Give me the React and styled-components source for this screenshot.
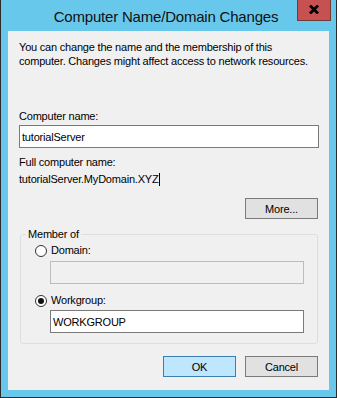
import React from 'react'
import styled, { createGlobalStyle } from 'styled-components'

const GlobalStyle = createGlobalStyle`
  html, body {
    margin: 0;
    padding: 0;
    background: #68c8ec;
  }
  body {
    font-family: "Liberation Sans", Arial, sans-serif;
    font-size: 11px;
    color: #000;
  }
`

const Frame = styled.div`
  box-sizing: border-box;
  width: 337px;
  height: 398px;
  background: #68c8ec;
  border: 1px solid #2b2b2b;
  border-top: none;
  display: flex;
  flex-direction: column;
  padding: 0 7px 7px 7px;
`

const TitleBar = styled.div`
  height: 31px;
  margin: 0 -7px;
  padding-right: 5px;
  display: grid;
  grid-template-columns: 1fr auto 1fr;
  align-items: center;
`

const Title = styled.div`
  grid-column: 2;
  font-size: 15px;
  letter-spacing: -0.2px;
  color: #111;
  padding-top: 1px;
`

const CloseButton = styled.div`
  grid-column: 3;
  justify-self: end;
  align-self: start;
  box-sizing: border-box;
  width: 34px;
  height: 21px;
  background: #c75050;
  border: 1px solid #6e3a3a;
  border-top: none;
  display: flex;
  align-items: center;
  justify-content: center;
  padding-bottom: 1px;
`

const Client = styled.div`
  flex: 1;
  background: #f0f0f0;
  display: flex;
  flex-direction: column;
  padding: 9px 10px 0 11px;
  letter-spacing: -0.2px;
`

const Intro = styled.p`
  margin: 0;
  line-height: 14px;
  white-space: nowrap;
`

const Label = styled.div`
  line-height: 13px;
  margin-top: ${p => p.gap || 0}px;
`

const TextBox = styled.div`
  box-sizing: border-box;
  height: ${p => p.h || 23}px;
  width: ${p => (p.w ? `${p.w}px` : '100%')};
  margin-top: ${p => p.gap || 0}px;
  border: 1px solid ${p => (p.disabled ? '#bcbcbc' : '#7a7a7a')};
  background: ${p => (p.disabled ? '#f0f0f0' : '#fff')};
  padding: 0 2px;
  display: flex;
  align-items: center;
`

const ValueLine = styled.div`
  margin-top: 3px;
  line-height: 14px;
  display: flex;
  align-items: center;
`

const Caret = styled.span`
  display: inline-block;
  width: 1px;
  height: 13px;
  background: #000;
  margin-left: 1px;
`

const ButtonRow = styled.div`
  display: flex;
  justify-content: flex-end;
  gap: 9px;
  margin-top: ${p => p.gap || 0}px;
  padding-right: 1px;
`

const Button = styled.div`
  box-sizing: border-box;
  width: 73px;
  height: 21px;
  border: 1px solid ${p => (p.primary ? '#3c7fb1' : '#7a7a7a')};
  background: ${p => (p.primary ? '#bee6fd' : '#e1e1e1')};
  display: flex;
  align-items: center;
  justify-content: center;
`

const Group = styled.fieldset`
  margin: 9px 1px 0 1px;
  padding: 0 13px 10px 13px;
  border: 1px solid #dadfe3;
  border-radius: 3px;
  display: flex;
  flex-direction: column;
`

const Legend = styled.legend`
  padding: 0 2px;
  margin-left: -8px;
  line-height: 13px;
`

const RadioRow = styled.div`
  display: flex;
  align-items: center;
  gap: 4px;
  margin-top: ${p => p.gap || 0}px;
  margin-left: 1px;
  line-height: 13px;
`

const Radio = styled.span`
  box-sizing: border-box;
  width: 12px;
  height: 12px;
  border-radius: 50%;
  border: 1px solid #333;
  background: #fff;
  display: flex;
  align-items: center;
  justify-content: center;
  &::after {
    content: '';
    display: ${p => (p.checked ? 'block' : 'none')};
    width: 6px;
    height: 6px;
    border-radius: 50%;
    background: #111;
  }
`

const Indented = styled.div`
  padding-left: 16px;
`

const CloseIcon = () => (
  <svg width="10" height="9" viewBox="0 0 10 9">
    <path d="M1 0.5 L9 8.5 M9 0.5 L1 8.5" stroke="#000" strokeWidth="2.8" fill="none" />
  </svg>
)

export default function App() {
  return (
    <>
      <GlobalStyle />
      <Frame>
        <TitleBar>
          <Title>Computer Name/Domain Changes</Title>
          <CloseButton>
            <CloseIcon />
          </CloseButton>
        </TitleBar>
        <Client>
          <Intro>
            You can change the name and the membership of this
            <br />
            computer. Changes might affect access to network resources.
          </Intro>

          <Label gap={42}>Computer name:</Label>
          <TextBox gap={2}>tutorialServer</TextBox>

          <Label gap={8}>Full computer name:</Label>
          <ValueLine>
            tutorialServer.MyDomain.XYZ
            <Caret />
          </ValueLine>

          <ButtonRow gap={12}>
            <Button>More...</Button>
          </ButtonRow>

          <Group>
            <Legend>Member of</Legend>
            <RadioRow gap={3}>
              <Radio />
              Domain:
            </RadioRow>
            <Indented>
              <TextBox gap={4} disabled />
            </Indented>
            <RadioRow gap={10}>
              <Radio checked />
              Workgroup:
            </RadioRow>
            <Indented>
              <TextBox gap={3}>WORKGROUP</TextBox>
            </Indented>
          </Group>

          <ButtonRow gap={12}>
            <Button primary>OK</Button>
            <Button>Cancel</Button>
          </ButtonRow>
        </Client>
      </Frame>
    </>
  )
}
